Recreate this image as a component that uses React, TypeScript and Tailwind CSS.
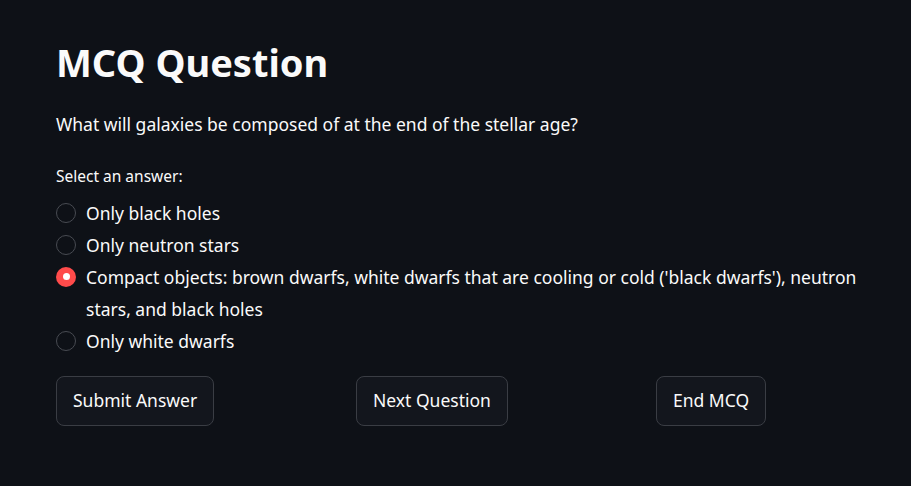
import React, { useState } from 'react';

const options = [
  'Only black holes',
  'Only neutron stars',
  "Compact objects: brown dwarfs, white dwarfs that are cooling or cold ('black dwarfs'), neutron stars, and black holes",
  'Only white dwarfs',
];

const App = () => {
  const [selected, setSelected] = useState(2);

  return (
    <div className="min-h-screen bg-[#0e1117] text-[#fafafa] pl-[56px] pr-[24px] pt-[40px] font-['Noto_Sans',sans-serif]">
      {/* Title */}
      <h1 className="text-[38px] leading-[1.2] font-bold">MCQ Question</h1>

      {/* Question */}
      <p className="mt-[24px] text-[17.5px] leading-[28px]">
        What will galaxies be composed of at the end of the stellar age?
      </p>

      {/* Answer options */}
      <div className="mt-[28px] text-[15.5px] leading-[20px]">Select an answer:</div>
      <div className="mt-[11px] flex flex-col">
        {options.map((opt, i) => (
          <label
            key={opt}
            className="flex items-start gap-[10px] cursor-pointer text-[17.5px] leading-[32px]"
            onClick={() => setSelected(i)}
          >
            <span className="mt-[6px] shrink-0 w-[20px] h-[20px]">
              {selected === i ? (
                <span className="flex w-[20px] h-[20px] rounded-full bg-[#ff4b4b] items-center justify-center">
                  <span className="w-[7px] h-[7px] rounded-full bg-white" />
                </span>
              ) : (
                <span className="block w-[20px] h-[20px] rounded-full border border-[#484b52]" />
              )}
            </span>
            <span>{opt}</span>
          </label>
        ))}
      </div>

      {/* Actions */}
      <div className="mt-[19px] grid grid-cols-[300px_300px_300px]">
        {['Submit Answer', 'Next Question', 'End MCQ'].map((b) => (
          <div key={b}>
            <button className="h-[50px] px-4 rounded-lg bg-[#13161d] border border-[#3a3d44] text-[17.5px] text-[#fafafa]">
              {b}
            </button>
          </div>
        ))}
      </div>
    </div>
  );
};

export default App;
